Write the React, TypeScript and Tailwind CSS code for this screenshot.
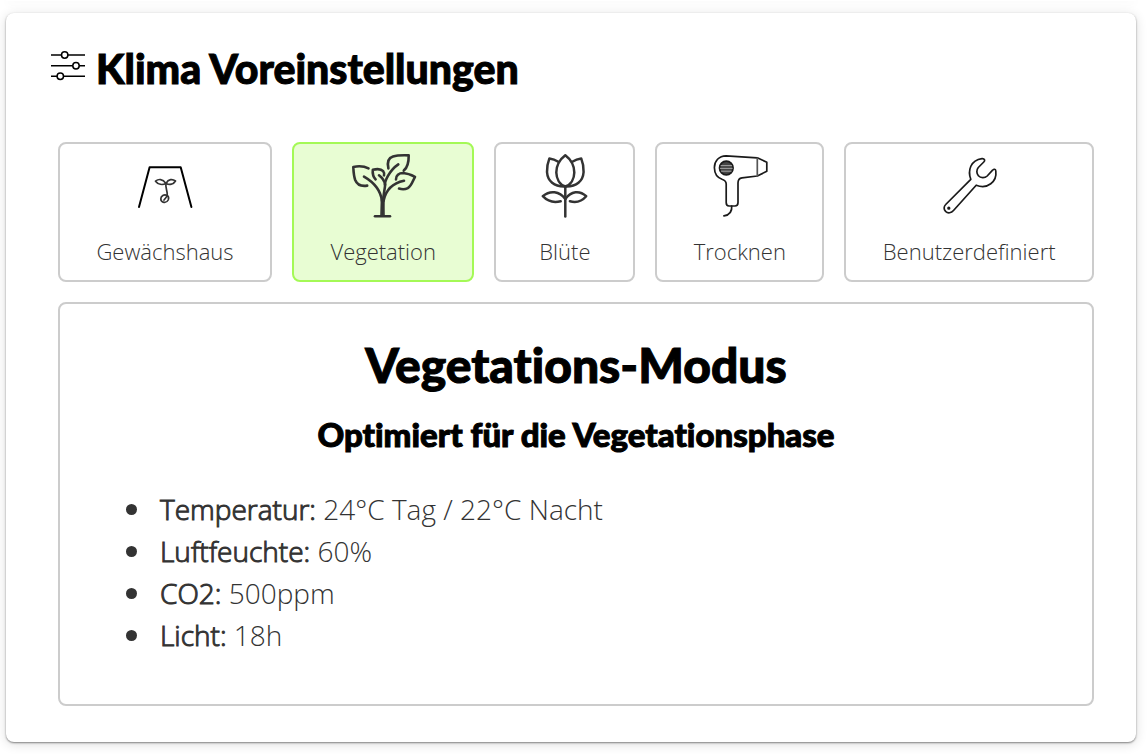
import { useState } from 'react';

const stroke = {
  fill: 'none',
  strokeLinecap: 'round',
  strokeLinejoin: 'round',
} as const;

function SlidersIcon() {
  return (
    <svg viewBox="0 0 36 36" className="h-9 w-9 shrink-0" fill="#fff" stroke="#000" strokeWidth="1.5" aria-hidden="true">
      <path d="M1 8H35M1 18.8H35M1 29.3H35" />
      <circle cx="14.7" cy="8" r="3.2" />
      <circle cx="26" cy="18.8" r="3.2" />
      <circle cx="10.3" cy="29.3" r="3.2" />
    </svg>
  );
}

function GreenhouseIcon() {
  return (
    <svg viewBox="0 0 64 64" className="h-16 w-16 overflow-visible" {...stroke} aria-hidden="true">
      <path d="M6 53 16.6 13.2H47.7L58.4 53" stroke="#000" strokeWidth="2" />
      <g stroke="#333" strokeWidth="1.7">
        <path d="M33 29.5C29.5 24.5 25.5 24.8 22.5 27.2 25 30.6 29.5 31 33 29.5Z" />
        <path d="M33 29.5C35.5 24.8 39.5 24.8 42.5 27 40.5 30.4 36.5 31 33 29.5Z" />
        <path d="M33 29.5C32 34 34.8 37 34.2 41.5 33 44 31.8 45 31 46" />
        <path d="M34.2 41.5C31 40 27.8 42 27.8 45 28 49 33.5 49.5 35.2 46 36 44 35.6 42.5 34.2 41.5Z" />
      </g>
    </svg>
  );
}

function PlantIcon() {
  return (
    <svg viewBox="0 0 64 64" className="h-16 w-16 overflow-visible" {...stroke} stroke="#333" strokeWidth="2.6" aria-hidden="true">
      <path d="M17.5 14.4C13 12 8 11.7 2.3 12.9 2.5 17 2.6 21.5 4.2 26 6 30.5 10.5 32.5 16.2 31.6" />
      <path d="M13 22.6C21.5 27.5 29.5 34.5 31 47" />
      <path d="M24.6 25.4C22 22.5 21.3 20 21.8 15.8 26 14.7 30 14.7 32.2 17.2 33.4 18.8 33.4 20.3 33 21.4" />
      <path d="M28 21.3C31.5 24 33.6 27 34.2 30.8" />
      <path d="M47.3 10.4C39 16 33.2 27 34 32 33.5 38 31.6 42 31.5 61" />
      <path d="M37.4 14.4C36 8.5 37.5 4 42 2.5 47 1 52.5 1.2 57.7 1.4 57.8 7 57.5 12.5 52.8 16.6" />
      <path d="M45 25.4C44.8 21.5 48 19 52 19 56.5 19.3 60.5 21 64 22.8 61.5 27.5 60.5 32 56.8 34.2 54 35.6 50.5 35.4 48 34.6" />
      <path d="M53 26.8C42 29 35 35 32.5 47" />
      <path d="M24 62.3H39" />
      <path d="M30.5 43 30 61.5M32.8 43 33 61.5" strokeWidth="1.6" />
    </svg>
  );
}

function FlowerIcon() {
  return (
    <svg viewBox="0 0 64 64" className="h-16 w-16 overflow-visible" {...stroke} stroke="#333" strokeWidth="2.5" aria-hidden="true">
      <path d="M32.3 1.2C26 6 23.3 12 23.3 18.5 23.5 24.5 26.5 30.5 32.3 32.5 38.2 30.5 41.2 24.5 41.3 18.5 41.3 12 38.6 6 32.3 1.2Z" />
      <path d="M25.3 7.8C22 5.6 19.5 4.8 16.4 4.4 14.6 9 13.8 13 14 18 14.6 27 21 33 32.3 32.5 43.6 33 50 27 50.6 18 50.8 13 50 9 48.2 4.4 45.1 4.8 42.6 5.6 39.3 7.8" />
      <path d="M32.3 32.5V62.5" />
      <path d="M32.3 45C26.5 37 17 36 9.8 42.2 15 47.7 21 49 27.7 47.2" />
      <path d="M32.3 45C38.1 37 46.5 36 53.2 42.2 48.5 47.7 43.5 49 36.9 47.2" />
    </svg>
  );
}

function DryerIcon() {
  return (
    <svg viewBox="0 0 64 64" className="h-16 w-16 overflow-visible" {...stroke} stroke="#1a1a1a" strokeWidth="1.7" aria-hidden="true">
      <path d="M49.3 3.8 18 1.8C11 1.9 6.3 7 6.4 13.8 6.5 19 9 23.5 14 25.3 16.8 26.2 18.2 27.5 18.2 30V48.5C18.2 51 19 52 21 52H27C29.2 52 30 51 30 48.5V29C30 25.5 31 24.2 34 23.8L49.3 22 58.8 17.3V8.2Z" />
      <path d="M49.3 4V22" stroke="#555" />
      <path d="M23.7 52C24.2 57.5 21.5 61 15.9 61.8" />
      <circle cx="18.3" cy="14" r="6.8" fill="#444" />
      <path d="M13 11.6H23.6M12.4 14.4H24.2M13.4 17.2H23.2" stroke="#ccc" strokeWidth="0.7" />
    </svg>
  );
}

function WrenchIcon() {
  return (
    <svg viewBox="0 0 64 64" className="h-16 w-16 overflow-visible" {...stroke} stroke="#1a1a1a" strokeWidth="1.7" aria-hidden="true">
      <path d="M33.8 25.3C30.5 16.5 33.5 6.2 45 4.6 47.6 4.4 48.4 6.4 46.8 8L41.3 13.5C39.2 16 39.5 19.6 41.4 21.7 43.6 24.2 47.8 24.3 50.2 22L55.6 16.2C57 14.6 58.6 15.1 58.8 17 60.2 27.5 50.5 35.8 39.2 31.2L16.5 56.5C14.4 59 10.8 59.6 8.7 57.5 6.5 55.6 6.7 52.4 8.7 50.5Z" />
      <circle cx="11.8" cy="54.2" r="0.8" fill="#1a1a1a" />
    </svg>
  );
}

const presets = [
  { name: 'Gewächshaus', Icon: GreenhouseIcon },
  { name: 'Vegetation', Icon: PlantIcon },
  { name: 'Blüte', Icon: FlowerIcon },
  { name: 'Trocknen', Icon: DryerIcon },
  { name: 'Benutzerdefiniert', Icon: WrenchIcon },
];

const settings = [
  { label: 'Temperatur:', value: '24°C Tag / 22°C Nacht' },
  { label: 'Luftfeuchte:', value: '60%' },
  { label: 'CO2:', value: '500ppm' },
  { label: 'Licht:', value: '18h' },
];

// shared by all three headings
const headingFont =
  "font-['Lato',sans-serif] font-black text-black [font-variant-ligatures:none] [-webkit-text-stroke:1px_#000]";

export default function App() {
  const [selected, setSelected] = useState('Vegetation');

  return (
    <div className="bg-white pb-3 pl-[6px] pr-3 font-['Open_Sans',sans-serif] font-light text-[#333]">
      <div className="h-px rounded-b-lg bg-white shadow-[0_1px_10px_rgba(0,0,0,0.14)]" />
      <main className="mt-3 rounded-lg bg-white pb-9 pl-[42px] pr-8 pt-[34px] shadow-[0_1px_2px_rgba(0,0,0,0.45),0_2px_12px_rgba(0,0,0,0.14)]">
        <header className="flex items-start gap-[10px] pl-[2px]">
          <SlidersIcon />
          <h1 className={`text-[41px] leading-[44px] ${headingFont}`}>
            Klima Voreinstellungen
          </h1>
        </header>

        <div className="mx-[10px] mt-[51px] flex gap-5">
          {presets.map(({ name, Icon }) => (
            <button
              key={name}
              type="button"
              aria-pressed={selected === name}
              onClick={() => setSelected(name)}
              className={`flex h-[140px] grow cursor-pointer flex-col items-center rounded-lg border-2 px-[35px] pt-[10px] ${
                selected === name
                  ? 'border-[#a4f956] bg-[#e8fdd3]'
                  : 'border-[#ccc] bg-white'
              }`}
            >
              <Icon />
              <span className="mt-5 text-[22px] leading-[26px]">{name}</span>
            </button>
          ))}
        </div>

        <section className="mx-[10px] mt-5 rounded-lg border-2 border-[#ccc] px-10 pb-12 pt-8">
          <h2 className={`text-center text-[48px] leading-[58px] ${headingFont}`}>
            Vegetations-Modus
          </h2>
          <h3 className={`mt-5 text-center text-[33px] leading-10 ${headingFont}`}>
            Optimiert für die Vegetationsphase
          </h3>
          <ul className="mt-[34px] pl-[26px] text-[28px] leading-[42px]">
            {settings.map(({ label, value }) => (
              <li
                key={label}
                className="flex items-center gap-[23px] before:size-[11px] before:shrink-0 before:rounded-full before:bg-[#333]"
              >
                <span>
                  <strong className="font-light [-webkit-text-stroke:1px_#333]">{label}</strong>{' '}
                  {value}
                </span>
              </li>
            ))}
          </ul>
        </section>
      </main>
    </div>
  );
}
